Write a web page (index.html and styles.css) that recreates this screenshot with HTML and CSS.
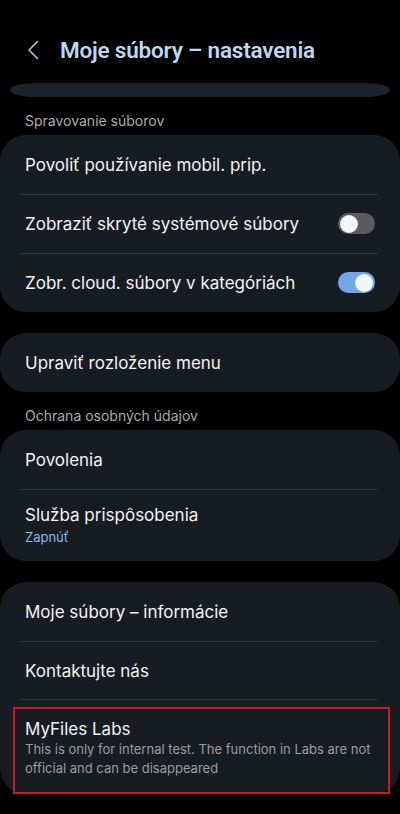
FILE: index.html
```html
<!DOCTYPE html>
<html lang="sk">
<head>
<meta charset="utf-8">
<title>Moje súbory – nastavenia</title>
<link rel="stylesheet" href="styles.css">
</head>
<body>
<header class="appbar">
  <span class="back">
    <svg width="12" height="20" viewBox="0 0 12 20"><path d="M10.5 1.5 L2 10 L10.5 18.5" fill="none" stroke="#a9c3e3" stroke-width="1.6" stroke-linecap="round" stroke-linejoin="round"/></svg>
  </span>
  <h1 class="title">Moje súbory – nastavenia</h1>
</header>
<div class="sliver"></div>
<div class="label">Spravovanie súborov</div>
<section class="card">
  <div class="row"><span class="text">Povoliť používanie mobil. prip.</span></div>
  <div class="row"><span class="text">Zobraziť skryté systémové súbory</span><span class="switch"><span class="knob"></span></span></div>
  <div class="row"><span class="text">Zobr. cloud. súbory v kategóriách</span><span class="switch on"><span class="knob"></span></span></div>
</section>
<section class="card">
  <div class="row"><span class="text">Upraviť rozloženie menu</span></div>
</section>
<div class="label">Ochrana osobných údajov</div>
<section class="card">
  <div class="row"><span class="text">Povolenia</span></div>
  <div class="row tall"><div class="stack"><span class="text">Služba prispôsobenia</span><span class="sub blue">Zapnúť</span></div></div>
</section>
<section class="card">
  <div class="row"><span class="text">Moje súbory – informácie</span></div>
  <div class="row"><span class="text">Kontaktujte nás</span></div>
  <div class="row labs"><div class="stack"><span class="text">MyFiles Labs</span><span class="sub gray">This is only for internal test. The function in Labs are not official and can be disappeared</span></div></div>
</section>
</body>
</html>
```
FILE: styles.css
```css
* { box-sizing: border-box; }
html, body { margin: 0; padding: 0; background: #000; }
body {
  width: 400px;
  height: 814px;
  overflow: hidden;
  font-family: Inter, Roboto, "Noto Sans", sans-serif;
  color: #f2f2f2;
}
.appbar {
  height: 83px;
  display: flex;
  align-items: center;
  padding: 16px 0 0 27px;
}
.back { width: 12px; height: 20px; display: flex; }
.title {
  margin: 0 0 0 21px;
  font-family: Roboto, "Noto Sans", sans-serif;
  font-size: 22.5px;
  font-weight: 600;
  color: #bcd6f5;
  letter-spacing: -0.2px;
}
.sliver {
  height: 14px;
  margin: 0 10px;
  background: #1d232b;
  border-radius: 24px / 7px;
}
.label {
  padding: 16px 25px 6px;
  font-size: 14px;
  line-height: 16px;
  color: #ababab;
}
.card {
  background: #171c23;
  border-radius: 26px;
}
.card + .card { margin-top: 21px; }
.row {
  height: 59px;
  display: flex;
  align-items: center;
  justify-content: space-between;
  padding: 0 25px;
  position: relative;
}
.row + .row::before {
  content: "";
  position: absolute;
  top: 0;
  left: 20px;
  right: 22px;
  height: 1px;
  background: #30353c;
}
.row.tall { height: 72px; }
.row.labs {
  height: 87px;
  align-items: flex-start;
  padding: 11px 0 0 12px;
  outline: 2px solid #c81e1e;
  outline-offset: -2px;
  margin: 7px 10px -7px 13px;
}
.row.labs::before { top: -8px; left: 7px; right: 12px; }
.text { font-size: 17px; line-height: 22px; color: #f2f2f2; }
.stack { display: flex; flex-direction: column; }
.sub { font-size: 13px; line-height: 19px; }
.blue { color: #8fb6ea; margin-top: 2px; }
.gray { color: #9c9c9c; }
.switch {
  width: 37px;
  height: 21px;
  border-radius: 11px;
  background: #5b5b5f;
  position: relative;
}
.switch .knob {
  position: absolute;
  top: 1.5px;
  left: 2px;
  width: 18px;
  height: 18px;
  border-radius: 50%;
  background: #f4f4f4;
}
.switch.on { background: #71a7e6; }
.switch.on .knob { left: auto; right: 2px; background: #f3f6fb; }
```
